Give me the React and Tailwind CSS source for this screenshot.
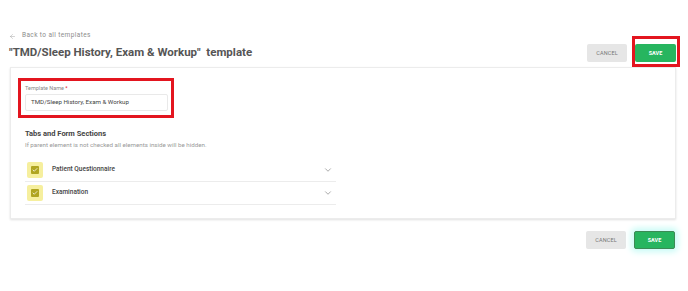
import React from 'react';
import { ChevronDown, Check, ArrowLeft } from 'lucide-react';

const sections = ['Patient Questionnaire', 'Examination'];

const Buttons = ({ highlight, glow }) => (
  <div className="flex items-center gap-[8px]">
    <button className="flex items-center justify-center w-[40px] h-[18px] rounded-[2px] bg-[#e6e6e6] text-[5.5px] tracking-wide text-[#777] uppercase">
      Cancel
    </button>
    <div className="relative flex">
      <button
        className={`flex items-center justify-center w-[41px] h-[18px] rounded-[2px] bg-[#27b55f] text-[5.5px] font-bold text-white uppercase ${
          glow ? 'border border-[#3c8a55] shadow-[0_0_6px_3px_#c9fbf6]' : ''
        }`}
      >
        Save
      </button>
      {highlight && (
        <span className="pointer-events-none absolute -left-[3px] -top-[8px] -right-[4px] -bottom-[5px] border-[3px] border-[#e3151f]" />
      )}
    </div>
  </div>
);

const App = () => {
  return (
    <div className="min-h-[291px] bg-white pl-[9px] pr-[12px] pt-[31px] font-['Roboto',sans-serif]">
      <div className="flex items-center gap-[6px] h-[10px] text-[6.5px] tracking-[0.06em] text-[#8c8c8c]">
        <ArrowLeft className="w-[7px] h-[7px] text-[#999]" strokeWidth={1.5} />
        <span>Back to all templates</span>
      </div>

      <div className="mt-[1px] h-[22px] flex items-center justify-between">
        <h1 className="text-[11.5px] font-bold text-[#555]">"TMD/Sleep History, Exam &amp; Workup"&nbsp; template</h1>
        <Buttons highlight />
      </div>

      <div className="mt-[3px] ml-[1px] border border-[#ececec] shadow-[0_1px_2px_rgba(0,0,0,0.12)] pl-[7px] pt-[10px] pb-[13px]">
        <div className="w-[156px] border-[3px] border-[#e3151f] pl-[4px] pr-[3px] pt-[3px] pb-[4px]">
          <label className="block text-[5.5px] text-[#888] leading-[8px]">
            Template Name <span className="text-[#e3151f]">*</span>
          </label>
          <div className="mt-[2px] h-[17px] border border-[#e9e9e9] rounded-[2px] flex items-center px-[5px] text-[6.2px] text-[#444]">
            TMD/Sleep History, Exam &amp; Workup
          </div>
        </div>

        <div className="pl-[7px]">
          <h2 className="mt-[11px] text-[7.5px] font-bold text-[#444] leading-[10px]">Tabs and Form Sections</h2>
          <p className="mt-[2px] text-[6.2px] text-[#999] leading-[8px]">
            If parent element is not checked all elements inside will be hidden.
          </p>

          <div className="mt-[10px] w-[311px]">
            {sections.map((s) => (
              <div key={s} className="h-[23px] flex items-center border-b border-[#ececec]">
                <div className="ml-[2px] w-[16px] h-[16px] rounded-[2px] bg-[#f6ef9e] flex items-center justify-center">
                  <div className="w-[8px] h-[8px] rounded-[1px] bg-[#b0a520] flex items-center justify-center">
                    <Check className="w-[6px] h-[6px] text-white" strokeWidth={3} />
                  </div>
                </div>
                <span className="ml-[9px] text-[6.5px] font-medium text-[#444]">{s}</span>
                <ChevronDown className="ml-auto mr-[3px] w-[10px] h-[10px] text-[#777]" strokeWidth={1.5} />
              </div>
            ))}
          </div>
        </div>
      </div>

      <div className="mt-[12px] flex justify-end pr-[1px]">
        <Buttons glow />
      </div>
    </div>
  );
};

export default App;
